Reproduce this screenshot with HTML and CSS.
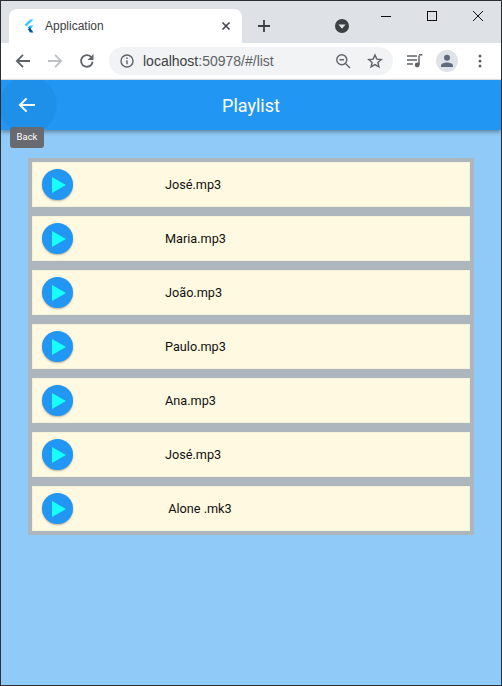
FILE: index.html
```html
<!DOCTYPE html>
<html lang="en">
<head>
    <meta charset="UTF-8">
    <title>Application</title>
    <link rel="stylesheet" href="styles.css">
</head>
<body>
    <div class="window">
        <!-- Tab strip -->
        <div class="tabstrip">
            <div class="tab">
                <svg class="flutter-logo" width="12" height="14" viewBox="0 0 12 14">
                    <path d="M7 0.5h3.6L3.4 7.5 1.6 5.7z" fill="#47c5fb"/>
                    <path d="M7 6.6h3.6L6.8 10.3 5 8.5z" fill="#47c5fb"/>
                    <path d="M5 8.5l1.8-1.8 1.8 1.8-1.8 1.8z" fill="#00b5f8"/>
                    <path d="M5 10.3l1.8-1.8 3.8 5h-3.6z" fill="#00569e"/>
                </svg>
                <span class="tab-title">Application</span>
                <svg class="tab-close" width="10" height="10" viewBox="0 0 10 10">
                    <path d="M1.5 1.5l7 7M8.5 1.5l-7 7" stroke="#45484c" stroke-width="1.7" fill="none"/>
                </svg>
            </div>
            <svg class="new-tab" width="14" height="14" viewBox="0 0 14 14">
                <path d="M7 1v12M1 7h12" stroke="#3c4043" stroke-width="1.8" fill="none"/>
            </svg>
            <svg class="tab-search" width="14" height="14" viewBox="0 0 14 14">
                <circle cx="7" cy="7" r="7" fill="#3c4043"/>
                <path d="M3.4 5.4h7.2L7 9.8z" fill="#dee1e6"/>
            </svg>
            <div class="window-buttons">
                <svg width="12" height="12" viewBox="0 0 12 12"><path d="M1 6.5h10" stroke="#111" stroke-width="1"/></svg>
                <svg width="12" height="12" viewBox="0 0 12 12"><rect x="1.5" y="1.5" width="9" height="9" fill="none" stroke="#111" stroke-width="1"/></svg>
                <svg width="12" height="12" viewBox="0 0 12 12"><path d="M1 1l10 10M11 1L1 11" stroke="#111" stroke-width="1" fill="none"/></svg>
            </div>
        </div>

        <!-- Toolbar -->
        <div class="toolbar">
            <svg class="nav-icon" width="16" height="16" viewBox="0 0 16 16"><path d="M15 8H2M8 1.8L1.8 8 8 14.2" stroke="#5f6368" stroke-width="1.8" fill="none"/></svg>
            <svg class="nav-icon" width="16" height="16" viewBox="0 0 16 16"><path d="M1 8h13M8 1.8L14.2 8 8 14.2" stroke="#bdc1c6" stroke-width="1.8" fill="none"/></svg>
            <svg class="nav-icon" width="16" height="16" viewBox="0 0 16 16"><path d="M13.6 8.6A5.8 5.8 0 1 1 12 3.9" stroke="#5f6368" stroke-width="1.8" fill="none"/><path d="M14.5 1v6h-6z" fill="#5f6368"/></svg>
            <div class="omnibox">
                <svg width="14" height="14" viewBox="0 0 14 14"><circle cx="7" cy="7" r="6" fill="none" stroke="#5f6368" stroke-width="1.4"/><path d="M7 6.2v4M7 3.6v1.5" stroke="#5f6368" stroke-width="1.4"/></svg>
                <span class="url"><span class="url-host">localhost</span>:50978/#/list</span>
                <svg class="zoom-icon" width="16" height="16" viewBox="0 0 16 16"><circle cx="6.8" cy="6.8" r="5" fill="none" stroke="#5f6368" stroke-width="1.4"/><path d="M10.5 10.5l4.5 4.5M4.5 6.8h4.6" stroke="#5f6368" stroke-width="1.4"/></svg>
                <svg class="star-icon" width="16" height="16" viewBox="0 0 16 16"><path d="M8 2l1.8 4.1 4.5.4-3.4 3 1 4.4L8 11.6l-3.9 2.3 1-4.4-3.4-3 4.5-.4z" fill="none" stroke="#5f6368" stroke-width="1.4"/></svg>
            </div>
            <svg class="media-icon" width="16" height="14" viewBox="0 0 16 14"><path d="M0 2h10M0 6h10M0 10h6" stroke="#5f6368" stroke-width="1.3"/><path d="M12 1.5v9" stroke="#5f6368" stroke-width="1.5"/><path d="M12 .8h3.4" stroke="#5f6368" stroke-width="1.5"/><circle cx="10.2" cy="11" r="2.4" fill="#5f6368"/></svg>
            <div class="avatar">
                <svg width="14" height="14" viewBox="0 0 14 14"><circle cx="7" cy="3.8" r="3" fill="#5f6b7c"/><path d="M1 13v-1.6C1 9.4 4.4 8.4 7 8.4s6 1 6 3V13z" fill="#5f6b7c"/></svg>
            </div>
            <svg class="menu-icon" width="4" height="14" viewBox="0 0 4 14"><circle cx="2" cy="2" r="1.5" fill="#5f6368"/><circle cx="2" cy="7" r="1.5" fill="#5f6368"/><circle cx="2" cy="12" r="1.5" fill="#5f6368"/></svg>
        </div>

        <!-- Page -->
        <div class="page">
            <header class="app-bar">
                <div class="back-splash"></div>
                <svg class="back-icon" width="18" height="16" viewBox="0 0 18 16"><path d="M17 8H2M8.6 1.4L2 8l6.6 6.6" stroke="#fff" stroke-width="2" fill="none"/></svg>
                <h1 class="app-title">Playlist</h1>
            </header>
            <div class="tooltip">Back</div>
            <div class="playlist">
                <div class="track">
                    <button class="play-button"><svg width="14" height="16" viewBox="0 0 14 16"><path d="M0 0l14 8-14 8z" fill="#18ffff"/></svg></button>
                    <span class="track-name">José.mp3</span>
                </div>
                <div class="track">
                    <button class="play-button"><svg width="14" height="16" viewBox="0 0 14 16"><path d="M0 0l14 8-14 8z" fill="#18ffff"/></svg></button>
                    <span class="track-name">Maria.mp3</span>
                </div>
                <div class="track">
                    <button class="play-button"><svg width="14" height="16" viewBox="0 0 14 16"><path d="M0 0l14 8-14 8z" fill="#18ffff"/></svg></button>
                    <span class="track-name">João.mp3</span>
                </div>
                <div class="track">
                    <button class="play-button"><svg width="14" height="16" viewBox="0 0 14 16"><path d="M0 0l14 8-14 8z" fill="#18ffff"/></svg></button>
                    <span class="track-name">Paulo.mp3</span>
                </div>
                <div class="track">
                    <button class="play-button"><svg width="14" height="16" viewBox="0 0 14 16"><path d="M0 0l14 8-14 8z" fill="#18ffff"/></svg></button>
                    <span class="track-name">Ana.mp3</span>
                </div>
                <div class="track">
                    <button class="play-button"><svg width="14" height="16" viewBox="0 0 14 16"><path d="M0 0l14 8-14 8z" fill="#18ffff"/></svg></button>
                    <span class="track-name">José.mp3</span>
                </div>
                <div class="track">
                    <button class="play-button"><svg width="14" height="16" viewBox="0 0 14 16"><path d="M0 0l14 8-14 8z" fill="#18ffff"/></svg></button>
                    <span class="track-name"> Alone .mk3</span>
                </div>
            </div>
        </div>
    </div>
</body>
</html>
```

FILE: styles.css
```css
/* Browser frame */
html, body {
    margin: 0;
    height: 100%;
    overflow: hidden;
}
.window {
    box-sizing: border-box;
    width: 502px;
    height: 686px;
    border: 1px solid #2b2f33;
    display: flex;
    flex-direction: column;
    font-family: Roboto, "Liberation Sans", sans-serif;
}
.tabstrip {
    height: 42px;
    flex: none;
    box-sizing: border-box;
    padding: 8px 0 0 8px;
    background-color: #dee1e6;
    display: flex;
    align-items: center;
    position: relative;
}
.tab {
    width: 233px;
    height: 34px;
    box-sizing: border-box;
    padding: 0 11px 0 14px;
    background-color: #ffffff;
    border-radius: 8px 8px 0 0;
    display: flex;
    align-items: center;
}
.flutter-logo {
    flex: none;
}
.tab-title {
    margin-left: 10px;
    flex: 1;
    font-family: "Liberation Sans", sans-serif;
    font-size: 12px;
    color: #3c4043;
}
.tab-close {
    flex: none;
}
.new-tab {
    margin-left: 15px;
}
.tab-search {
    margin-left: 64px;
}
.window-buttons {
    position: absolute;
    top: 9px;
    right: 17px;
    display: flex;
    gap: 34px;
}
.toolbar {
    height: 37px;
    flex: none;
    box-sizing: border-box;
    padding: 0 0 1px 14px;
    background-color: #ffffff;
    border-bottom: 1px solid #e3e5e8;
    display: flex;
    align-items: center;
}
.nav-icon {
    flex: none;
    margin-right: 16px;
}
.nav-icon:nth-child(3) {
    margin-right: 14px;
}
.omnibox {
    width: 284px;
    height: 28px;
    box-sizing: border-box;
    padding: 0 10px 0 11px;
    background-color: #f1f3f4;
    border-radius: 14px;
    display: flex;
    align-items: center;
}
.url {
    margin-left: 9px;
    flex: 1;
    font-family: "Liberation Sans", sans-serif;
    font-size: 14px;
    color: #5f6368;
}
.url-host {
    color: #3c4043;
}
.star-icon {
    margin-left: 16px;
}
.media-icon {
    margin-left: 14px;
}
.avatar {
    width: 22px;
    height: 22px;
    margin-left: 13px;
    background-color: #dfe3e8;
    border-radius: 50%;
    display: flex;
    align-items: center;
    justify-content: center;
}
.menu-icon {
    margin-left: 20px;
}

/* Flutter page */
.page {
    flex: 1;
    background-color: #90caf9;
    position: relative;
}
.app-bar {
    height: 50px;
    background-color: #2196f3;
    box-shadow: 0 2px 4px rgba(0, 0, 0, 0.35);
    display: flex;
    align-items: center;
    justify-content: center;
    position: relative;
    overflow: hidden;
}
.back-splash {
    position: absolute;
    left: -2px;
    top: -4px;
    width: 58px;
    height: 58px;
    border-radius: 50%;
    background-color: rgba(0, 0, 0, 0.035);
}
.back-icon {
    position: absolute;
    left: 17px;
    top: 17px;
}
.app-title {
    margin: 0;
    font-size: 18px;
    font-weight: 400;
    color: #ffffff;
}
.tooltip {
    position: absolute;
    left: 9px;
    top: 47px;
    width: 34px;
    height: 21px;
    background-color: #676a6e;
    border-radius: 3px;
    color: #ffffff;
    font-size: 9.5px;
    line-height: 20px;
    text-align: center;
}
.playlist {
    margin: 28px 0 0 27px;
    width: 438px;
    padding: 4px;
    background-color: #adb5bd;
    display: flex;
    flex-direction: column;
    gap: 9px;
}
.track {
    height: 45px;
    box-sizing: border-box;
    padding-left: 9px;
    background-color: #fef9e0;
    border: 1px solid #f6f2da;
    display: flex;
    align-items: center;
}
.play-button {
    width: 31px;
    height: 31px;
    flex: none;
    padding: 0 0 0 3px;
    border: none;
    border-radius: 50%;
    background-color: #2196f3;
    box-shadow: 0 1px 2px rgba(0, 0, 0, 0.3);
    display: flex;
    align-items: center;
    justify-content: center;
}
.track-name {
    margin-left: 92px;
    font-size: 12.7px;
    color: #111111;
    white-space: pre;
}
```
